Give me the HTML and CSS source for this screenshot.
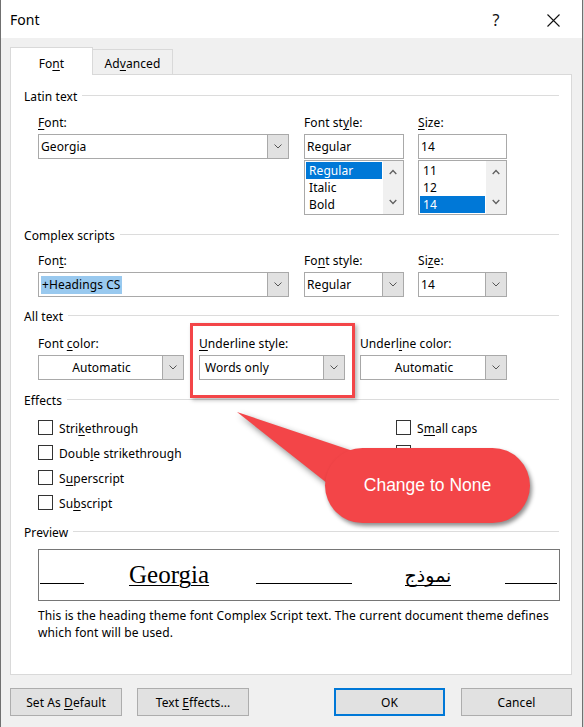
FILE: index.html
```html
<!DOCTYPE html>
<html>
<head>
<meta charset="utf-8">
<title>Font</title>
<link rel="stylesheet" href="styles.css">
</head>
<body>
<div class="window">
  <div class="titlebar">
    <span class="title">Font</span>
    <span class="help">?</span>
    <span class="close"><svg width="13" height="13" viewBox="0 0 13 13"><path d="M0.5 0.5 L12.5 12.5 M12.5 0.5 L0.5 12.5" stroke="#111" stroke-width="1.1" fill="none"/></svg></span>
  </div>
  <div class="client">
    <div class="tabs">
      <div class="tab active"><span>Fo<u>n</u>t</span></div>
      <div class="tab"><span>Ad<u>v</u>anced</span></div>
    </div>
    <div class="panel">
      <div class="ghead"><span>Latin text</span></div>
      <div class="fields latin">
        <div class="field w-font">
          <div class="lbl"><u>F</u>ont:</div>
          <div class="combo"><span class="val">Georgia</span><span class="drop"><svg width="8" height="5" viewBox="0 0 8 5"><path d="M0.5 0.5 L4 4 L7.5 0.5" fill="none" stroke="#555"/></svg></span></div>
        </div>
        <div class="field w-style">
          <div class="lbl">Font st<u>y</u>le:</div>
          <div class="combo"><span class="val">Regular</span></div>
          <div class="list">
            <div class="items">
              <div class="item sel">Regular</div>
              <div class="item">Italic</div>
              <div class="item">Bold</div>
            </div>
            <div class="sbar">
              <svg width="8" height="6" viewBox="0 0 8 6"><path d="M0.7 5 L4 1.5 L7.3 5" fill="none" stroke="#606060" stroke-width="1.3"/></svg>
              <svg width="8" height="6" viewBox="0 0 8 6"><path d="M0.7 1 L4 4.5 L7.3 1" fill="none" stroke="#606060" stroke-width="1.3"/></svg>
            </div>
          </div>
        </div>
        <div class="field w-size">
          <div class="lbl"><u>S</u>ize:</div>
          <div class="combo"><span class="val">14</span></div>
          <div class="list">
            <div class="items">
              <div class="item">11</div>
              <div class="item">12</div>
              <div class="item sel">14</div>
            </div>
            <div class="sbar">
              <svg width="8" height="6" viewBox="0 0 8 6"><path d="M0.7 5 L4 1.5 L7.3 5" fill="none" stroke="#606060" stroke-width="1.3"/></svg>
              <svg width="8" height="6" viewBox="0 0 8 6"><path d="M0.7 1 L4 4.5 L7.3 1" fill="none" stroke="#606060" stroke-width="1.3"/></svg>
            </div>
          </div>
        </div>
      </div>

      <div class="ghead g-complex"><span>Complex scripts</span></div>
      <div class="fields complex">
        <div class="field w-font">
          <div class="lbl">Fon<u>t</u>:</div>
          <div class="combo"><span class="val"><span class="hl">+Headings CS</span></span><span class="drop"><svg width="8" height="5" viewBox="0 0 8 5"><path d="M0.5 0.5 L4 4 L7.5 0.5" fill="none" stroke="#555"/></svg></span></div>
        </div>
        <div class="field w-style">
          <div class="lbl">Fo<u>n</u>t style:</div>
          <div class="combo"><span class="val">Regular</span><span class="drop"><svg width="8" height="5" viewBox="0 0 8 5"><path d="M0.5 0.5 L4 4 L7.5 0.5" fill="none" stroke="#555"/></svg></span></div>
        </div>
        <div class="field w-size">
          <div class="lbl">Si<u>z</u>e:</div>
          <div class="combo"><span class="val">14</span><span class="drop"><svg width="8" height="5" viewBox="0 0 8 5"><path d="M0.5 0.5 L4 4 L7.5 0.5" fill="none" stroke="#555"/></svg></span></div>
        </div>
      </div>

      <div class="ghead g-all"><span>All text</span></div>
      <div class="fields alltext">
        <div class="field w-third">
          <div class="lbl">Font <u>c</u>olor:</div>
          <div class="combo"><span class="val center">Automatic</span><span class="drop"><svg width="8" height="5" viewBox="0 0 8 5"><path d="M0.5 0.5 L4 4 L7.5 0.5" fill="none" stroke="#555"/></svg></span></div>
        </div>
        <div class="field w-third gap15">
          <div class="lbl"><u>U</u>nderline style:</div>
          <div class="combo"><span class="val pad5">Words only</span><span class="drop"><svg width="8" height="5" viewBox="0 0 8 5"><path d="M0.5 0.5 L4 4 L7.5 0.5" fill="none" stroke="#555"/></svg></span></div>
        </div>
        <div class="field w-third3 gap15">
          <div class="lbl">Underl<u>i</u>ne color:</div>
          <div class="combo"><span class="val center">Automatic</span><span class="drop"><svg width="8" height="5" viewBox="0 0 8 5"><path d="M0.5 0.5 L4 4 L7.5 0.5" fill="none" stroke="#555"/></svg></span></div>
        </div>
      </div>

      <div class="ghead g-effects"><span>Effects</span></div>
      <div class="effects">
        <div class="check"><span class="box"></span><span>Stri<u>k</u>ethrough</span></div>
        <div class="check"><span class="box"></span><span>Doub<u>l</u>e strikethrough</span></div>
        <div class="check"><span class="box"></span><span>S<u>u</u>perscript</span></div>
        <div class="check"><span class="box"></span><span>Su<u>b</u>script</span></div>
        <div class="check"><span class="box"></span><span>S<u>m</u>all caps</span></div>
        <div class="check"><span class="box"></span></div>
        <div class="check"><span class="box"></span></div>
      </div>

      <div class="ghead g-preview"><span>Preview</span></div>
      <div class="preview">
        <span class="seg seg1"></span>
        <span class="pv-latin"><span class="ul">Georgia</span></span>
        <span class="seg seg2"></span>
        <span class="pv-arabic"><span class="ul-ar">نموذج</span></span>
        <span class="seg seg3"></span>
      </div>
      <div class="desc">This is the heading theme font Complex Script text. The current document theme defines which font will be used.</div>
    </div>

    <div class="buttons">
      <div class="btn"><span>Set As <u>D</u>efault</span></div>
      <div class="btn gap15"><span>Text <u>E</u>ffects...</span></div>
      <div class="spacer"></div>
      <div class="btn primary"><span>OK</span></div>
      <div class="btn gap16"><span>Cancel</span></div>
    </div>
  </div>

  <div class="redbox"></div>
  <svg class="tail" width="140" height="100" viewBox="0 0 140 100"><polygon points="7,7 126,47 102,82" fill="#f34548"/></svg>
  <div class="pill">Change to None</div>
</div>
</body>
</html>
```

FILE: styles.css
```css
* { box-sizing: border-box; }
html, body { margin: 0; padding: 0; }
body {
  width: 584px;
  height: 727px;
  overflow: hidden;
  background: #d6d6d6;
  font-family: "Noto Sans", "Segoe UI", sans-serif;
  font-size: 12px;
  letter-spacing: 0.08px;
  color: #000;
}
u { text-decoration-thickness: 1px; text-underline-offset: 2px; }

.window {
  position: relative;
  width: 583px;
  height: 727px;
  background: #f0f0f0;
  border-left: 1px solid #707070;
  border-right: 1px solid #707070;
}

/* title bar */
.titlebar {
  height: 38px;
  background: #fff;
  display: flex;
  align-items: center;
  padding-left: 9px;
  padding-top: 2px;
}
.title { flex: 1; font-size: 14px; line-height: 20px; letter-spacing: 0; }
.help { width: 20px; text-align: center; font-size: 16px; line-height: 20px; margin-right: 37px; color: #111; }
.close { width: 20px; height: 13px; display: flex; justify-content: center; margin-right: 19px; }

/* client */
.client { padding: 9px 10px 0 9px; }

.tabs { display: flex; align-items: flex-end; height: 27px; }
.tab {
  height: 25px;
  width: 80px;
  text-align: center;
  line-height: 16px;
  padding-top: 6px;
  border: 1px solid #d9d9d9;
  border-bottom: none;
  border-left: none;
  background: #f0f0f0;
}
.tab.active {
  position: relative;
  z-index: 1;
  width: 83px;
  height: 28px;
  margin-bottom: -1px;
  padding-top: 8px;
  background: #fff;
  border-left: 1px solid #d9d9d9;
}

.panel {
  height: 601px;
  background: #fff;
  border: 1px solid #d9d9d9;
  padding: 13px 12px 0 13px;
}

.ghead {
  display: flex;
  align-items: center;
  height: 16px;
  white-space: nowrap;
}
.ghead span { line-height: 16px; padding-top: 2px; }
.ghead::after {
  content: "";
  flex: 1;
  height: 1px;
  background: #dcdcdc;
  margin-left: 5px;
  margin-top: -1px;
}
.g-complex { margin-top: 12px; }
.g-all { margin-top: 11px; }
.g-effects { margin-top: 12px; }
.g-preview { margin-top: 9px; }

.fields { display: flex; margin-left: 14px; }
.latin { margin-top: 10px; }
.complex { margin-top: 9px; }
.alltext { margin-top: 11px; }

.field { display: flex; flex-direction: column; }
.w-font { width: 251px; }
.w-style { width: 100px; margin-left: 15px; }
.w-size { width: 89px; margin-left: 14px; }
.w-third { width: 146px; }
.w-third3 { width: 147px; }
.gap15 { margin-left: 15px; }
.gap16 { margin-left: 16px; }

.lbl { height: 17px; line-height: 16px; padding-top: 1px; margin-bottom: 3px; white-space: nowrap; }

.combo {
  height: 25px;
  border: 1px solid #a9a9a9;
  background: #fff;
  display: flex;
  align-items: stretch;
}
.val {
  flex: 1;
  display: flex;
  align-items: center;
  padding-left: 2px;
  white-space: nowrap;
  overflow: hidden;
}
.val.center { justify-content: center; }
.val.pad5 { padding-left: 5px; }
.hl { background: #99c9ef; line-height: 18px; padding: 0 1px; }
.drop {
  width: 21px;
  background: #e1e1e1;
  border-left: 1px solid #a9a9a9;
  display: flex;
  align-items: center;
  justify-content: center;
}

.list {
  margin-top: 1px;
  height: 55px;
  border: 1px solid #a9a9a9;
  background: #fff;
  display: flex;
}
.items { flex: 1; padding: 1px 1px 0 1px; }
.item { height: 17px; line-height: 17px; padding-left: 3px; }
.item.sel { background: #0078d7; color: #fff; }
.sbar {
  width: 20px;
  background: #f0f0f0;
  display: flex;
  flex-direction: column;
  align-items: center;
  justify-content: space-between;
  padding: 8px 0 9px 0;
}

/* effects */
.effects {
  display: grid;
  grid-template-columns: 358px auto;
  grid-template-rows: repeat(4, 25px);
  grid-auto-flow: column;
  margin: 7px 0 0 14px;
}
.check { display: flex; align-items: center; white-space: nowrap; }
.check span:last-child { padding-top: 1px; }
.box {
  width: 15px;
  height: 15px;
  border: 1px solid #333;
  background: #fff;
  margin-right: 6px;
}

/* preview */
.preview {
  margin: 9px 0 0 14px;
  width: 522px;
  height: 52px;
  border: 1px solid #767676;
  display: flex;
  align-items: flex-start;
  padding-left: 1px;
}
.seg { height: 1px; background: #000; margin-top: 33px; }
.seg1 { width: 44px; }
.pv-latin { width: 80px; margin-left: 45px; margin-top: 12px; white-space: nowrap; }
.ul {
  font-family: "Liberation Serif", "Times New Roman", serif;
  font-size: 25px;
  line-height: 25px;
  letter-spacing: 0;
  text-decoration: underline;
  text-decoration-thickness: 1px;
  text-underline-offset: 2px;
}
.seg2 { width: 96px; margin-left: 47px; }
.pv-arabic { width: 46px; margin-left: 53px; margin-top: 15px; display: flex; justify-content: center; }
.ul-ar {
  font-family: "DejaVu Sans", serif;
  font-size: 19px;
  line-height: 20px;
  letter-spacing: 0;
  direction: rtl;
  border-bottom: 1px solid #000;
  display: inline-block;
}
.seg3 { width: 52px; margin-left: 54px; }

.desc { margin: 6px 0 0 14px; line-height: 17px; letter-spacing: 0.12px; }

/* buttons */
.buttons { display: flex; margin-top: 13px; height: 28px; }
.btn {
  width: 112px;
  height: 28px;
  background: #e1e1e1;
  border: 1px solid #adadad;
  display: flex;
  align-items: center;
  justify-content: center;
  white-space: nowrap;
}
.btn.primary, .btn.gap16 { width: 111px; }
.btn.primary { border: 2px solid #0078d7; }
.spacer { flex: 1; }

/* annotation overlays */
.redbox {
  position: absolute;
  left: 189px;
  top: 323px;
  width: 165px;
  height: 75px;
  border: 3px solid #f34548;
  box-shadow: 2px 2px 4px rgba(0, 0, 0, 0.3);
}
.tail {
  position: absolute;
  left: 229px;
  top: 405px;
  filter: drop-shadow(2px 3px 3px rgba(0, 0, 0, 0.45));
}
.pill {
  position: absolute;
  left: 324px;
  top: 448px;
  width: 205px;
  height: 75px;
  border-radius: 38px;
  background: #f34548;
  color: #fff;
  font-family: "Liberation Sans", Arial, sans-serif;
  font-size: 17.5px;
  letter-spacing: 0;
  display: flex;
  align-items: center;
  justify-content: center;
  box-shadow: 2px 3px 4px rgba(0, 0, 0, 0.45);
}
```
